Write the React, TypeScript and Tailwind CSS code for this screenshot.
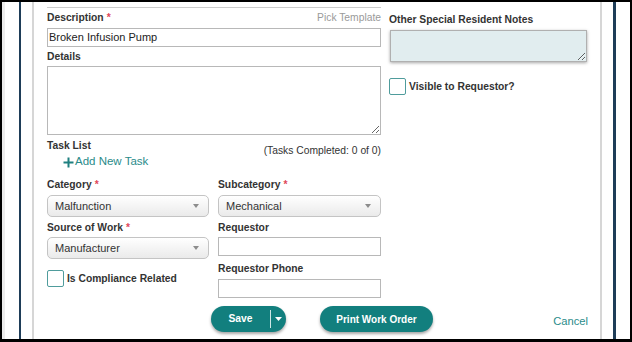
import React from "react";

const Req = () => <span className="text-[#e0475a] ml-[3px]">*</span>;

const Label = ({ children, req }: { children: React.ReactNode; req?: boolean }) => (
  <div className="text-[10.3px] leading-[14px] font-bold text-[#333]">
    {children}
    {req && <Req />}
  </div>
);

const Select = ({ value, className = "" }: { value: string; className?: string }) => (
  <div
    className={
      "h-[22px] w-full border border-[#c4c4c4] rounded-[5px] bg-gradient-to-b from-white to-[#eaeaea] flex items-center pl-[7px] pr-[9px] text-[11px] text-[#333] " +
      className
    }
  >
    <span className="flex-1">{value}</span>
    <svg width="6" height="4" viewBox="0 0 6 4">
      <path d="M0 0 L6 0 L3 4 Z" fill="#8c8c8c" />
    </svg>
  </div>
);

const Input = ({ value = "", className = "" }: { value?: string; className?: string }) => (
  <div
    className={
      "h-[19px] w-full border border-[#b8b8b8] bg-white flex items-center px-[1px] text-[11px] text-[#222] " +
      className
    }
  >
    {value}
  </div>
);

const Checkbox = () => (
  <div className="w-[17px] h-[17px] border border-[#4f9c9c] rounded-[2px] bg-white shrink-0" />
);

export default function App() {
  return (
    <div className="w-[632px] h-[342px] border-t-2 border-l-2 border-r-2 border-b-[3px] border-black bg-white flex overflow-hidden font-['Liberation_Sans',Arial,sans-serif]">
      <div className="w-[3px] bg-[#ececec]" />
      <div className="w-[14px]" />
      <div className="w-[2px] bg-[#1e3d58]" />
      <div className="w-[11px]" />
      <div className="w-[2px] bg-[#d6d6d6]" />

      <main className="w-[566px] flex flex-col pt-[5px]">
        <div className="flex pl-[13px]">
          {/* left column */}
          <div className="w-[334px] border-t border-[#cccccc] flex flex-col">
            <div className="flex justify-between items-start mt-[3px]">
              <Label req>Description</Label>
              <div className="text-[10.3px] leading-[14px] text-[#9a9a9a]">Pick Template</div>
            </div>
            <Input value="Broken Infusion Pump" className="mt-[3px]" />
            <div className="mt-[3px]">
              <Label>Details</Label>
            </div>
            <textarea className="mt-[2px] w-full h-[69px] border border-[#b8b8b8] bg-white resize-y block outline-none" />
            <div className="flex justify-between items-start mt-[4px] h-[14px]">
              <Label>Task List</Label>
              <div className="text-[10.3px] leading-[14px] text-[#333] mt-[5px]">
                (Tasks Completed: 0 of 0)
              </div>
            </div>
            <div className="flex items-center ml-[16px] mt-[2px] h-[14px] text-[11.5px] text-[#2a8b8a]">
              <svg width="11" height="11" viewBox="0 0 11 11" className="mr-[1px]">
                <path d="M5.5 0.5 V10.5 M0.5 5.5 H10.5" stroke="#1f8080" strokeWidth="2" />
              </svg>
              <span>Add New Task</span>
            </div>
            <div className="grid grid-cols-[162px_163px] gap-x-[9px] mt-[9px]">
              <div className="flex flex-col">
                <Label req>Category</Label>
                <Select value="Malfunction" className="mt-[3px]" />
                <div className="mt-[4px]">
                  <Label req>Source of Work</Label>
                </div>
                <Select value="Manufacturer" className="mt-[2px]" />
                <div className="flex items-center mt-[11px]">
                  <Checkbox />
                  <div className="ml-[3px]">
                    <Label>Is Compliance Related</Label>
                  </div>
                </div>
              </div>
              <div className="flex flex-col">
                <Label req>Subcategory</Label>
                <Select value="Mechanical" className="mt-[3px]" />
                <div className="mt-[4px]">
                  <Label>Requestor</Label>
                </div>
                <Input className="mt-[2px]" />
                <div className="mt-[6px]">
                  <Label>Requestor Phone</Label>
                </div>
                <Input className="mt-[3px]" />
              </div>
            </div>
          </div>

          {/* right column */}
          <div className="w-[198px] ml-[8px] flex flex-col">
            <div className="mt-[6px]">
              <Label>Other Special Resident Notes</Label>
            </div>
            <textarea className="mt-[3px] ml-[1px] w-[197px] h-[32px] border border-[#b0b0b0] bg-[#e1edef] shadow-[0_1px_3px_rgba(0,0,0,0.35)] resize-y block outline-none" />
            <div className="flex items-center mt-[16px]">
              <Checkbox />
              <div className="ml-[3px]">
                <Label>Visible to Requestor?</Label>
              </div>
            </div>
          </div>
        </div>

        {/* buttons */}
        <div className="flex items-center pl-[177px] pr-[12px] mt-[8px]">
          <div className="w-[75px] h-[26px] rounded-full bg-[#127f7e] shadow-[0_2px_3px_rgba(0,0,0,0.35)] flex items-center text-white">
            <div className="w-[59px] text-center text-[10.3px] font-bold">Save</div>
            <div className="w-px h-[18px] bg-[#cfe6e5]" />
            <div className="flex-1 flex justify-center pr-[1px]">
              <svg width="7" height="4" viewBox="0 0 7 4">
                <path d="M0 0 L7 0 L3.5 4 Z" fill="white" />
              </svg>
            </div>
          </div>
          <div className="ml-[34px] w-[113px] h-[26px] rounded-full bg-[#127f7e] shadow-[0_2px_3px_rgba(0,0,0,0.35)] flex items-center justify-center text-white text-[10px] font-bold">
            Print Work Order
          </div>
          <div className="ml-auto mt-[4px] text-[11.2px] text-[#2a8b8a]">Cancel</div>
        </div>
      </main>

      <div className="w-[2px] bg-[#d6d6d6]" />
      <div className="w-[11px]" />
      <div className="w-[3px] bg-[#1e3d58]" />
      <div className="flex-1" />
    </div>
  );
}
